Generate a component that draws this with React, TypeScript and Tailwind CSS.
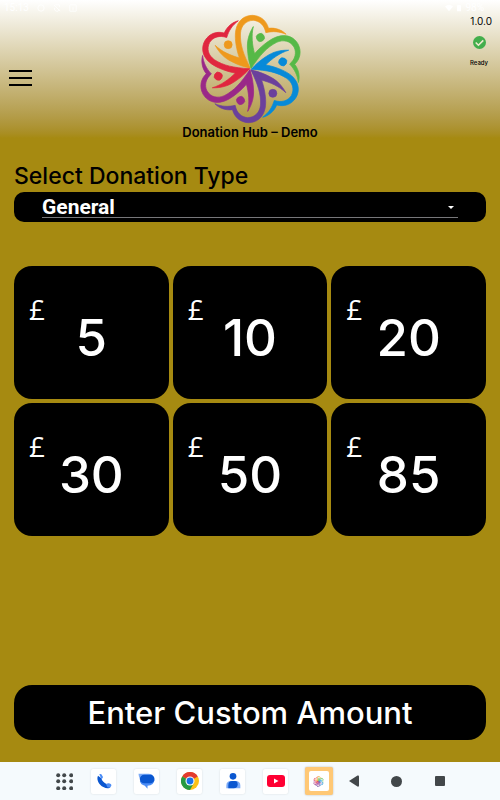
import { useState, type ReactNode } from "react";

const DONATION_TYPES = ["General", "Zakat", "Sadaqah"];
const AMOUNTS = [5, 10, 20, 30, 50, 85];

const PETALS = [
  { color: "#ee991c", angle: 0 },
  { color: "#56b947", angle: 60 },
  { color: "#078ad8", angle: 120 },
  { color: "#6b409c", angle: 180 },
  { color: "#9a2888", angle: 240 },
  { color: "#e0263f", angle: 300 },
];

function HubLogo({ className }: { className: string }) {
  return (
    <svg viewBox="80 41 310 336" className={className} aria-hidden="true">
      {PETALS.map(({ color, angle }) => (
        <g key={angle} fill={color} stroke={color} strokeWidth="2" transform={`rotate(${angle} 235 209)`}>
          <path d="M234 206C214 200 204 184 199 168C191 142 187 112 191 92C197 62 218 48 241 48C267 49 284 66 289 87C309 84 330 92 342 105C322 96 302 95 281 100C277 78 262 64 243 63C221 64 207 79 205 101C203 134 213 163 234 206Z" />
          <path d="M129 138C149 157 176 169 203 176L234 206C214 203 195 195 179 187C156 176 141 160 129 138Z" />
          <circle cx="168" cy="136" r="12" />
        </g>
      ))}
    </svg>
  );
}

function StatusBar() {
  return (
    <div className="flex h-4 items-center justify-between px-1 font-[Roboto] text-[10px] leading-4 text-white">
      <div className="flex items-center gap-2">
        <span>15:13</span>
        <svg viewBox="0 0 10 10" className="h-2 w-2" fill="none" stroke="currentColor">
          <circle cx="5" cy="5" r="4" />
        </svg>
        <svg viewBox="0 0 10 10" className="h-2 w-2" fill="none" stroke="currentColor">
          <path d="M1 1l8 8M2 5a3 3 0 006 2M3 1h5v3" />
        </svg>
        <svg viewBox="0 0 10 10" className="h-2 w-2" fill="none" stroke="currentColor">
          <path d="M1 1h8v8H1zM5 4v4" />
        </svg>
      </div>
      <div className="flex items-center gap-1 pr-3">
        <svg viewBox="0 0 10 8" className="h-2 w-2" fill="currentColor">
          <path d="M0 2Q5-2 10 2L5 8z" />
        </svg>
        <svg viewBox="0 0 6 10" className="h-2 w-1" fill="currentColor">
          <path d="M0 1h2V0h2v1h2v9H0z" />
        </svg>
        <span>98%</span>
      </div>
    </div>
  );
}

function Header() {
  return (
    <header className="h-[138px] bg-linear-to-b from-white to-[#a68a11]">
      <StatusBar />
      <div className="grid grid-cols-[1fr_auto_1fr]">
        <div className="pt-[54px] pl-[9px]">
          <button aria-label="Menu" className="flex w-[23px] flex-col gap-[5px]">
            <span className="h-[2px] w-full bg-black" />
            <span className="h-[2px] w-full bg-black" />
            <span className="h-[2px] w-full bg-black" />
          </button>
        </div>
        <div className="flex flex-col items-center">
          <HubLogo className="-mt-[3px] h-28 w-[105px]" />
          <h1 className="-mt-[1px] text-[13px] leading-4 font-semibold">Donation Hub – Demo</h1>
        </div>
        <div className="flex flex-col items-end pr-2">
          <span className="text-[10px] leading-[10px]">1.0.0</span>
          <div className="mt-[10px] flex flex-col items-center pr-1">
            <svg viewBox="0 0 24 24" className="h-[13px] w-[13px]">
              <circle cx="12" cy="12" r="12" fill="#43ae4c" />
              <path d="M5 12l5 5 9-9" fill="none" stroke="#efe9d0" strokeWidth="3" />
            </svg>
            <span className="mt-2 text-[6px] leading-3 font-medium">Ready</span>
          </div>
        </div>
      </div>
    </header>
  );
}

function Tile({ label, children }: { label: string; children: ReactNode }) {
  return (
    <div className="flex w-[43px] justify-center">
      <button
        aria-label={label}
        className="flex h-[25px] w-[25px] items-center justify-center rounded-xs bg-white shadow-[0_0_2px_#d5dadd]"
      >
        {children}
      </button>
    </div>
  );
}

function NavButton({ label, children }: { label: string; children: ReactNode }) {
  return (
    <button aria-label={label} className="flex w-[43px] items-center justify-center text-[#42474a]">
      {children}
    </button>
  );
}

function Taskbar() {
  return (
    <nav className="flex h-[38px] items-center justify-center bg-[#f5fafd] pl-2">
      <button aria-label="All apps" className="flex w-[35px] justify-center">
        <svg viewBox="0 0 17 17" className="h-[17px] w-[17px]" fill="#42474a">
          {[2, 8, 15].map((y) => [2, 8, 15].map((x) => <circle key={`${x}-${y}`} cx={x + 0.2} cy={y + 0.2} r="2" />))}
        </svg>
      </button>
      <Tile label="Phone">
        <svg viewBox="0 0 24 24" className="h-4 w-4">
          <path d="M3 4C0 10 5 18 11 21c4 2 8 3 11 0l-5-4C12 15 9 12 8 8z" fill="#0b57d0" />
          <path d="M5 2c3-2 4 1 5 3s0 3-2 4zM15 17c3-3 9-1 8 2-1 2-4 4-6 2z" fill="#4c8df6" />
        </svg>
      </Tile>
      <Tile label="Messages">
        <svg viewBox="0 0 50 48" className="h-4 w-[17px]">
          <path d="M1 2h30Q44 2 46 12L30 24H14Q2 20 1 2z" fill="#7baaf7" />
          <path d="M5 24Q8 36 20 38L28 47V38Q48 36 49 20z" fill="#4c8df6" />
          <rect x="5" y="5" width="44" height="26" rx="13" fill="#0b57d0" />
        </svg>
      </Tile>
      <Tile label="Chrome">
        <svg viewBox="0 0 24 24" className="h-[18px] w-[18px]">
          <circle cx="12" cy="12" r="12" fill="#fbc116" />
          <path d="M12 12L1.6 6A12 12 0 0122.4 6z" fill="#e33b2e" />
          <path d="M12 12L1.6 6A12 12 0 0012 24l5-9z" fill="#269a43" />
          <circle cx="12" cy="12" r="6" fill="#fff" />
          <circle cx="12" cy="12" r="4.6" fill="#1a73e8" />
        </svg>
      </Tile>
      <Tile label="Contacts">
        <svg viewBox="0 0 24 24" className="h-4 w-4">
          <circle cx="12" cy="5" r="5" fill="#0b57d0" />
          <path d="M2 23v-4q0-7 7-7h7q7 0 7 7v4z" fill="#7baaf7" />
          <path d="M5 23v-5q0-6 6-6h4q4 0 4 5 0 6-6 6z" fill="#0b57d0" />
        </svg>
      </Tile>
      <Tile label="YouTube">
        <svg viewBox="0 0 18 12" className="h-3 w-[18px]">
          <rect width="18" height="12" rx="3" fill="#ff0033" />
          <path d="M7 3.5v5L11.500 6z" fill="#fff" />
        </svg>
      </Tile>
      <div className="flex w-[43px] justify-center">
        <button
          aria-label="Donation Hub"
          className="flex h-7 w-7 items-center justify-center rounded-xs bg-[#ffc875] shadow-[0_0_2px_#b5b5b5]"
        >
          <span className="flex h-5 w-5 items-center justify-center rounded-xs bg-white">
            <HubLogo className="h-[11px] w-[11px]" />
          </span>
        </button>
      </div>
      <div className="-ml-2 flex">
        <NavButton label="Back">
          <svg viewBox="0 0 10 12" className="h-3 w-[10px]" fill="currentColor">
            <path d="M0 6L8.500 .5Q10 0 10 1.500V10.500Q10 12 8.500 11.500z" />
          </svg>
        </NavButton>
        <NavButton label="Home">
          <span className="h-[11px] w-[11px] rounded-full bg-current" />
        </NavButton>
        <NavButton label="Recents">
          <span className="h-[10px] w-[10px] rounded-[1px] bg-current" />
        </NavButton>
      </div>
    </nav>
  );
}

export default function App() {
  const [type, setType] = useState(DONATION_TYPES[0]);
  const [amount, setAmount] = useState<number | null>(null);

  return (
    <div className="flex min-h-screen flex-col bg-[#a68a11] font-[Inter,sans-serif] text-black">
      <Header />
      <main className="flex flex-1 flex-col px-[14px] pt-6 pb-[22px]">
        <label htmlFor="donation-type" className="text-[23px] leading-7 font-medium">
          Select Donation Type
        </label>
        <div className="relative mt-[2px] h-[30px] rounded-[10px] bg-black px-7">
          <select
            id="donation-type"
            value={type}
            onChange={(e) => setType(e.target.value)}
            className="h-[26px] w-full appearance-none border-b border-[#77777a] bg-transparent pt-1 font-[Roboto] text-[21px] leading-5 font-bold text-white"
          >
            {DONATION_TYPES.map((t) => (
              <option key={t}>{t}</option>
            ))}
          </select>
          <svg viewBox="0 0 6 3" className="pointer-events-none absolute top-[14px] right-8 h-[3px] w-[6px]" fill="#fff">
            <path d="M0 0h6L3 3z" />
          </svg>
        </div>

        <div className="mt-11 grid grid-cols-3 gap-1">
          {AMOUNTS.map((n) => (
            <button
              key={n}
              aria-pressed={amount === n}
              onClick={() => setAmount(n)}
              className="relative flex h-[133px] items-center justify-center rounded-[18px] bg-black pt-[10px] text-white"
            >
              <span className="absolute top-[27px] left-[15px] font-['Open_Sans'] text-[28px] leading-8">£</span>
              <span className="text-[51px] leading-[52px] font-medium">{n}</span>
            </button>
          ))}
        </div>

        <button className="mt-auto h-[55px] rounded-[18px] bg-black text-[31px] leading-9 font-medium text-white">
          Enter Custom Amount
        </button>
      </main>
      <Taskbar />
    </div>
  );
}
